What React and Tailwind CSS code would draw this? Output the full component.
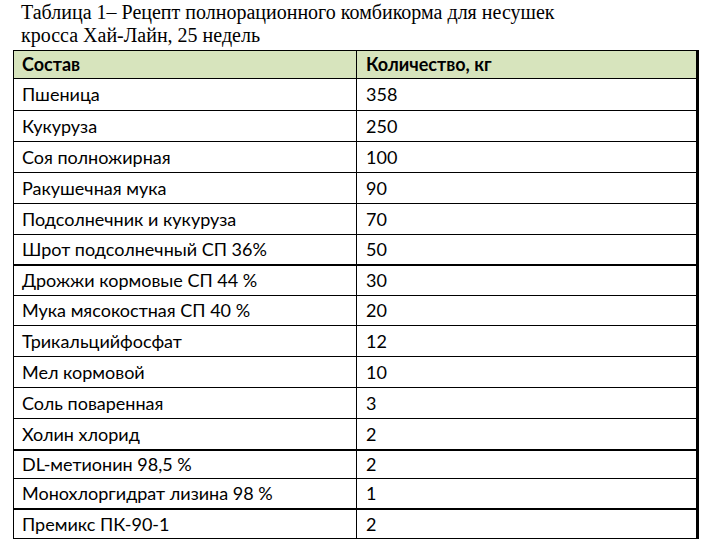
import React from "react";

const rows = [
  ["Пшеница", "358", 31, 1],
  ["Кукуруза", "250", 31, 1],
  ["Соя полножирная", "100", 31, 1],
  ["Ракушечная мука", "90", 31, 1],
  ["Подсолнечник и кукуруза", "70", 31, 1],
  ["Шрот подсолнечный СП 36%", "50", 30, 1],
  ["Дрожжи кормовые СП 44 %", "30", 31, 3],
  ["Мука мясокостная СП 40 %", "20", 30, 1],
  ["Трикальцийфосфат", "12", 31, 1],
  ["Мел кормовой", "10", 31, 1],
  ["Соль поваренная", "3", 31, 1],
  ["Холин хлорид", "2", 31, 1],
  ["DL-метионин 98,5 %", "2", 29, 3],
  ["Монохлоргидрат лизина 98 %", "1", 30, 1],
  ["Премикс ПК-90-1", "2", 30, 3],
];

export default function App() {
  return (
    <div className="w-[706px] h-[547px] bg-white overflow-hidden">
      <div
        className="pl-[21px] pt-[1px] text-[20px] leading-[23px] text-black"
        style={{ fontFamily: '"Liberation Serif", serif' }}
      >
        <div>Таблица 1– Рецепт полнорационного комбикорма для несушек</div>
        <div>кросса Хай-Лайн, 25 недель</div>
      </div>
      <div
        className="ml-[13px] mt-[3px] w-[686px] border-l border-t border-black border-r-[3px] border-b-[1.5px]"
        style={{ fontFamily: "Lato, sans-serif" }}
      >
        <div className="flex h-[28px] bg-[#d7e4bd] border-b border-black text-[18px] font-bold text-black">
          <div className="w-[343px] border-r border-black pl-[8px] flex items-center">Состав</div>
          <div className="flex-1 pl-[9px] flex items-center">Количество, кг</div>
        </div>
        {rows.map(([a, b, h, t], i) => (
          <div
            key={i}
            className={
              "flex text-[18px] text-black " +
              (t === 3 ? "border-t-[2px] border-black" : i === 0 ? "" : "border-t border-black")
            }
            style={{ height: h }}
          >
            <div className="w-[343px] border-r border-black pl-[8px] flex items-center">{a}</div>
            <div className="flex-1 pl-[9px] flex items-center">{b}</div>
          </div>
        ))}
      </div>
    </div>
  );
}
